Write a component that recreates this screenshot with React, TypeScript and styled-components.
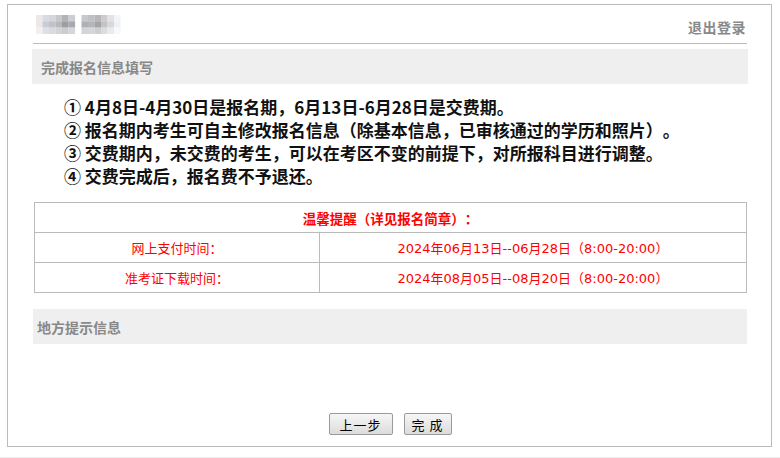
import React from 'react';
import styled, { createGlobalStyle } from 'styled-components';

const GlobalStyle = createGlobalStyle`
    body {
        margin: 0;
        background: #fff;
        font-family: "Noto Sans CJK SC", "Noto Sans", sans-serif;
        text-spacing-trim: space-all;
    }
`;

const Wrapper = styled.div`
    padding: 4px 9px 0 7px;
`;

const Panel = styled.div`
    box-sizing: border-box;
    width: 765px;
    height: 443px;
    border: 1px solid #bbb;
    padding: 0 23px 0 24px;
    display: flex;
    flex-direction: column;
`;

const Header = styled.div`
    display: flex;
    justify-content: space-between;
    align-items: center;
    height: 39px;
    margin: 0 1px;
    border-bottom: 1px solid #bbb;
    box-sizing: border-box;
    padding: 2px 1px 0 3px;
`;

const Logout = styled.a`
    font-size: 14px;
    font-weight: bold;
    color: #888;
    text-decoration: none;
    margin-top: 4px;
    letter-spacing: 0.5px;
`;

const Band = styled.div<{ $top: number; $pad: number; $inset?: number }>`
    height: 35px;
    background: #efefef;
    display: flex;
    align-items: center;
    margin: ${p => p.$top}px ${p => p.$inset || 0}px 0;
    padding-left: ${p => p.$pad}px;
    font-size: 14px;
    font-weight: bold;
    color: #888;
`;

const Notes = styled.ol`
    list-style: none;
    margin: 11px 0 0;
    padding: 0 0 0 32px;
    font-size: 17px;
    font-weight: bold;
    line-height: 23px;
    color: #111;
`;

const Table = styled.table`
    border-collapse: collapse;
    margin: 15px 1px 0 2px;
    width: 713px;
    color: #f00;
    font-family: "DejaVu Sans", "Noto Sans CJK SC", sans-serif;
    font-size: 13px;

    td {
        border: 1px solid #bbb;
        height: 29px;
        padding: 0;
        text-align: center;
    }
`;

const TitleCell = styled.td`
    font-family: "Noto Sans CJK SC", sans-serif;
    font-size: 13.5px;
    font-weight: bold;
`;

const Spacer = styled.div`
    flex: 1;
`;

const Actions = styled.div`
    display: flex;
    justify-content: center;
    gap: 11px;
    margin: 0 0 11px;
`;

const Button = styled.button<{ $w: number }>`
    width: ${p => p.$w}px;
    height: 22px;
    padding: 0;
    font-family: "Noto Sans CJK SC", sans-serif;
    font-size: 13px;
    color: #000;
    border: 1px solid #9a9a9a;
    border-radius: 2px;
    background: linear-gradient(#f6f6f6, #dcdcdc);
    letter-spacing: 1px;
`;

const Footer = styled.div`
    height: 4px;
    margin-top: 10px;
    background: #ebebeb;
`;

const mosaic = [
    ['#eee8e4', '#d8dbe2', '#d6d6da', '#c6c8cc', '#b3b3b6', '#cdcdd3', null, '#c8c8cc', '#bfc0c4', '#b8b8bb', '#d0cccc', '#e4e2e2', '#f2f4f8'],
    ['#ece8e6', '#c8ccd6', '#c0c2c8', '#b6b8bc', '#9e9ea2', '#a8aab2', null, '#aeb0b6', '#b4b6bc', '#a4a4a8', '#c4c2c2', '#d8d8dc', '#eef2f6'],
    ['#f2f0ee', '#dde0e6', '#d8dae0', '#d2d4d8', '#cccdd2', '#d4d6dc', null, '#d2d4d8', '#d4d6da', '#cdced2', '#dddcdc', '#eaeaec', '#f6f8fa'],
];

const Redacted = () => (
    <svg width="86" height="20" viewBox="0 0 86 20">
        {mosaic.map((row, r) =>
            row.map((c, i) =>
                c ? <rect key={r + '-' + i} x={i * 6.5} y={r * 6.3} width="6.6" height="6.4" fill={c} /> : null
            )
        )}
    </svg>
);

export default function App() {
    return (
        <>
            <GlobalStyle />
            <Wrapper>
                <Panel>
                    <Header>
                        <Redacted />
                        <Logout href="#">退出登录</Logout>
                    </Header>
                    <Band $top={5} $pad={9}>完成报名信息填写</Band>
                    <Notes>
                        <li>① 4月8日-4月30日是报名期，6月13日-6月28日是交费期。</li>
                        <li>② 报名期内考生可自主修改报名信息（除基本信息，已审核通过的学历和照片）。</li>
                        <li>③ 交费期内，未交费的考生，可以在考区不变的前提下，对所报科目进行调整。</li>
                        <li>④ 交费完成后，报名费不予退还。</li>
                    </Notes>
                    <Table>
                        <tbody>
                            <tr>
                                <TitleCell colSpan={2}>温馨提醒（详见报名简章）：</TitleCell>
                            </tr>
                            <tr>
                                <td style={{ width: '40%' }}>网上支付时间：</td>
                                <td>2024年06月13日--06月28日（8:00-20:00）</td>
                            </tr>
                            <tr>
                                <td>准考证下载时间：</td>
                                <td>2024年08月05日--08月20日（8:00-20:00）</td>
                            </tr>
                        </tbody>
                    </Table>
                    <Band $top={16} $inset={1} $pad={4}>地方提示信息</Band>
                    <Spacer />
                    <Actions>
                        <Button $w={64}>上一步</Button>
                        <Button $w={48}>完 成</Button>
                    </Actions>
                </Panel>
            </Wrapper>
            <Footer />
        </>
    );
}
